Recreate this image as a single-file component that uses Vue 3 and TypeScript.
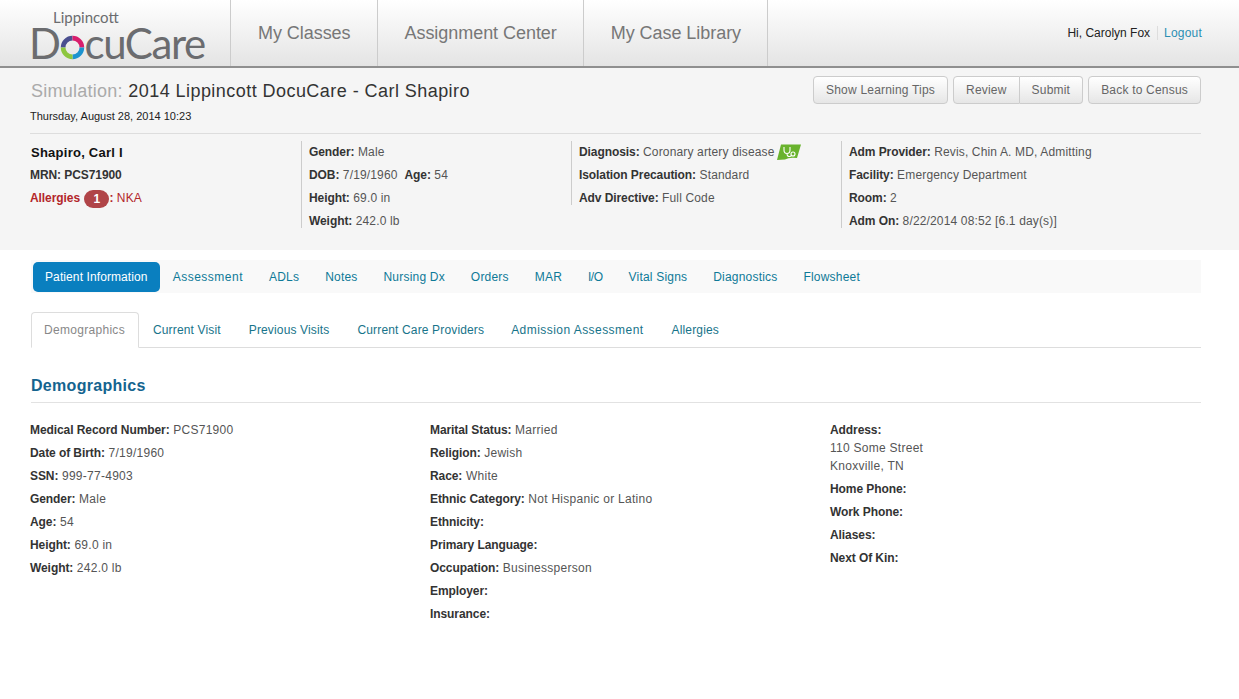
<script setup lang="ts">
const navItems = ['My Classes', 'Assignment Center', 'My Case Library'];
const mainTabs = ['Assessment', 'ADLs', 'Notes', 'Nursing Dx', 'Orders', 'MAR', 'I/O', 'Vital Signs', 'Diagnostics', 'Flowsheet'];
const subTabs = ['Current Visit', 'Previous Visits', 'Current Care Providers', 'Admission Assessment', 'Allergies'];

const col1 = [
  ['Medical Record Number:', 'PCS71900'],
  ['Date of Birth:', '7/19/1960'],
  ['SSN:', '999-77-4903'],
  ['Gender:', 'Male'],
  ['Age:', '54'],
  ['Height:', '69.0 in'],
  ['Weight:', '242.0 lb'],
];
const col2 = [
  ['Marital Status:', 'Married'],
  ['Religion:', 'Jewish'],
  ['Race:', 'White'],
  ['Ethnic Category:', 'Not Hispanic or Latino'],
  ['Ethnicity:', ''],
  ['Primary Language:', ''],
  ['Occupation:', 'Businessperson'],
  ['Employer:', ''],
  ['Insurance:', ''],
];
const col3 = ['Home Phone:', 'Work Phone:', 'Aliases:', 'Next Of Kin:'];

// "ss" and "I/O" run wider/narrower in the original's hinted text
function fit(label: string): Record<string, boolean> {
  return { wide: label.includes('Assessment'), tight: label === 'I/O' };
}
</script>

<template>
  <div class="page">
    <header class="topbar">
      <div class="logo">
        <span class="logo-small">Lippincott</span>
        <span class="logo-big">D<svg class="logo-o" width="25" height="25" viewBox="0 0 24 24">
          <path d="M3 12A9 9 0 0 1 12 3" fill="none" stroke="#4a4f8f" stroke-width="4.500" />
          <path d="M12 3A9 9 0 0 1 21 12" fill="none" stroke="#d81e6c" stroke-width="4.500" />
          <path d="M21 12A9 9 0 0 1 12 21" fill="none" stroke="#1c93cf" stroke-width="4.500" />
          <path d="M12 21A9 9 0 0 1 3 12" fill="none" stroke="#8dc63f" stroke-width="4.500" />
        </svg><span>cuCare</span></span>
      </div>
      <nav class="nav">
        <a v-for="item in navItems" :key="item" class="nav-item">{{ item }}</a>
      </nav>
      <div class="user">
        <span>Hi, Carolyn Fox</span>
        <a class="logout">Logout</a>
      </div>
    </header>

    <section class="patient">
      <div class="sim-row">
        <div>
          <h1 class="sim-title"><span>Simulation:</span> 2014 Lippincott DocuCare - Carl Shapiro</h1>
          <div class="sim-date">Thursday, August 28, 2014 10:23</div>
        </div>
        <div class="actions">
          <button class="btn">Show Learning Tips</button>
          <div class="btn-group">
            <button class="btn">Review</button>
            <button class="btn">Submit</button>
          </div>
          <button class="btn">Back to Census</button>
        </div>
      </div>

      <div class="banner">
        <div class="banner-col first">
          <div class="pname">Shapiro, Carl I</div>
          <div><b>MRN: PCS71900</b></div>
          <div class="allergy"><b>Allergies</b> <span class="badge">1</span><b>:</b> NKA</div>
        </div>
        <div class="banner-col">
          <div><b>Gender:</b> Male</div>
          <div><b>DOB:</b> 7/19/1960 &nbsp;<b>Age:</b> 54</div>
          <div><b>Height:</b> 69.0 in</div>
          <div><b>Weight:</b> 242.0 lb</div>
        </div>
        <div class="banner-col short">
          <div class="diag">
            <span><b>Diagnosis:</b> Coronary artery disease</span>
            <svg class="steth" width="24" height="16" viewBox="0 0 24 16">
              <path d="M0 16 4 0.500 24 0.500 20 14Q12 13 8 15.500Z" fill="#69b32d" />
              <path d="M7 3V6Q7 9.500 10 9.500Q13 9.500 13 6V3M10 9.500Q10 13 13 12.500L14.500 11.500" fill="none" stroke="#fff" stroke-width="1.100" />
              <circle cx="16" cy="10" r="2" fill="none" stroke="#fff" stroke-width="1.100" />
            </svg>
          </div>
          <div><b>Isolation Precaution:</b> Standard</div>
          <div><b>Adv Directive:</b> Full Code</div>
        </div>
        <div class="banner-col">
          <div><b>Adm Provider:</b> Revis, Chin A. MD, Admitting</div>
          <div><b>Facility:</b> Emergency Department</div>
          <div><b>Room:</b> 2</div>
          <div><b>Adm On:</b> 8/22/2014 08:52 [6.1 day(s)]</div>
        </div>
      </div>
    </section>

    <main class="content">
      <ul class="pills">
        <li class="pill active">Patient Information</li>
        <li v-for="tab in mainTabs" :key="tab" class="pill" :class="fit(tab)">{{ tab }}</li>
      </ul>

      <ul class="tabs">
        <li class="tab active">Demographics</li>
        <li v-for="tab in subTabs" :key="tab" class="tab" :class="fit(tab)">{{ tab }}</li>
      </ul>

      <h2 class="section-title">Demographics</h2>

      <div class="details">
        <div class="detail-col">
          <div v-for="row in col1" :key="row[0]" class="detail"><b>{{ row[0] }}</b> {{ row[1] }}</div>
        </div>
        <div class="detail-col">
          <div v-for="row in col2" :key="row[0]" class="detail"><b>{{ row[0] }}</b> {{ row[1] }}</div>
        </div>
        <div class="detail-col">
          <div class="address">
            <b>Address:</b>
            <div>110 Some Street</div>
            <div>Knoxville, TN</div>
          </div>
          <div v-for="label in col3" :key="label" class="detail"><b>{{ label }}</b></div>
        </div>
      </div>
    </main>
  </div>
</template>

<style>
html, body {
  margin: 0;
  background: #fff;
}
</style>

<style scoped>
.page {
  width: 1239px;
  height: 699px;
  overflow: hidden;
  font-family: "Liberation Sans", Arial, sans-serif;
  font-size: 12px;
  letter-spacing: 0.27px;
  color: #555;
}
b {
  color: #333;
  letter-spacing: -0.08px;
}
.topbar {
  height: 66px;
  display: flex;
  align-items: stretch;
  padding: 0 37px 0 30px;
  background: linear-gradient(#fff, #e4e4e4);
  border-bottom: 2px solid #8f8f8f;
}
.logo {
  width: 200px;
  display: flex;
  flex-direction: column;
  letter-spacing: 0;
  color: #6b6c6f;
  font-family: Lato, sans-serif;
}
.logo-small {
  margin: 9px 0 0 23px;
  font-size: 15px;
  line-height: 16px;
}
.logo-big {
  display: flex;
  align-items: center;
  height: 36px;
  margin-left: -1px;
  font-size: 42px;
  line-height: 36px;
  letter-spacing: -1.4px;
}
.logo-o {
  margin: 8px 0 0 0;
}
.nav {
  display: flex;
  border-left: 1px solid #ccc;
}
.nav-item {
  padding: 0 26px 0 27px;
  border-right: 1px solid #ccc;
  font-size: 18px;
  line-height: 66px;
  letter-spacing: -0.05px;
  color: #777;
}
.user {
  margin-left: auto;
  display: flex;
  align-items: center;
  color: #222;
  letter-spacing: 0;
}
.logout {
  margin-left: 7px;
  padding-left: 6px;
  border-left: 1px solid #ddd;
  color: #2b8fb3;
  letter-spacing: 0.2px;
}
.patient {
  height: 182px;
  padding: 0 38px 0 30px;
  background: #f5f5f5;
}
.sim-row {
  height: 65px;
  display: flex;
  justify-content: space-between;
  border-bottom: 1px solid #ddd;
}
.sim-title {
  margin: 11px 0 0 1px;
  font-size: 18px;
  line-height: 24px;
  font-weight: normal;
  letter-spacing: 0.45px;
  color: #333;
}
.sim-title span {
  color: #aaa;
  letter-spacing: 0.25px;
}
.sim-date {
  margin-top: 7px;
  font-size: 11px;
  letter-spacing: 0;
  color: #222;
}
.actions {
  display: flex;
  gap: 5px;
  margin-top: 8px;
  align-self: flex-start;
}
.btn {
  height: 28px;
  padding: 0 12px;
  border: 1px solid #ccc;
  border-radius: 4px;
  background: linear-gradient(#fff, #e6e6e6);
  font: inherit;
  letter-spacing: 0.2px;
  color: #666;
}
.btn-group {
  display: flex;
}
.btn-group .btn:first-child {
  border-radius: 4px 0 0 4px;
}
.btn-group .btn:last-child {
  border-left: 0;
  border-radius: 0 4px 4px 0;
}
.banner {
  display: flex;
  margin-top: 7px;
  line-height: 23px;
  letter-spacing: 0.15px;
}
.banner-col {
  width: 270px;
  height: 87px;
  padding-left: 7px;
  border-left: 1px solid #ccc;
  box-sizing: border-box;
}
.banner-col.first {
  width: 271px;
  padding-left: 0;
  border-left: 0;
}
.banner-col.short {
  height: 64px;
}
.pname {
  margin-left: 1px;
  font-size: 13px;
  font-weight: bold;
  letter-spacing: 0.25px;
  color: #111;
}
.allergy, .allergy b {
  color: #b3262a;
}
.badge {
  display: inline-block;
  width: 25px;
  height: 18px;
  margin-left: 1px;
  border-radius: 9px;
  background: #b04448;
  color: #fff;
  line-height: 18px;
  text-align: center;
  font-weight: bold;
  vertical-align: middle;
}
.diag {
  display: flex;
  align-items: center;
  gap: 2px;
  height: 23px;
}
.steth {
  margin-top: -1px;
}
.content {
  padding: 10px 38px 0 31px;
}
.pills {
  display: flex;
  align-items: flex-start;
  height: 30px;
  margin: 0;
  padding: 2px 0 1px 2px;
  list-style: none;
  background: #f9f9f9;
  letter-spacing: 0.2px;
}
.pill {
  padding: 0 13px;
  line-height: 30px;
  color: #0e7a98;
}
.pill.wide {
  letter-spacing: 0.5px;
}
.pill.tight {
  letter-spacing: -0.5px;
}
.pill.active {
  padding: 0 12px;
  border-radius: 5px;
  background: #0a7fbf;
  color: #fff;
  letter-spacing: 0.1px;
}
.tabs {
  display: flex;
  height: 35px;
  margin: 19px 0 0;
  padding: 0;
  list-style: none;
  border-bottom: 1px solid #ddd;
  letter-spacing: 0.15px;
}
.tab {
  padding: 0 14px;
  line-height: 36px;
  color: #17748a;
}
.tab.wide {
  margin-left: -1px;
  letter-spacing: 0.45px;
}
.tab.active {
  height: 36px;
  padding: 0 13px 0 12px;
  border: 1px solid #ddd;
  border-bottom-color: #fff;
  border-radius: 4px 4px 0 0;
  background: #fff;
  box-sizing: border-box;
  color: #888;
  line-height: 34px;
  letter-spacing: 0.3px;
}
.section-title {
  margin: 26px 0 0;
  padding-bottom: 5px;
  border-bottom: 1px solid #e2e2e2;
  font-size: 16px;
  line-height: 23px;
  font-weight: bold;
  letter-spacing: 0.3px;
  color: #14648f;
}
.details {
  display: flex;
  margin-top: 16px;
  margin-left: -1px;
  line-height: 23px;
}
.detail-col {
  flex: 0 0 400px;
}
.address {
  line-height: 18px;
  margin-top: 2px;
  margin-bottom: 3px;
}
</style>
